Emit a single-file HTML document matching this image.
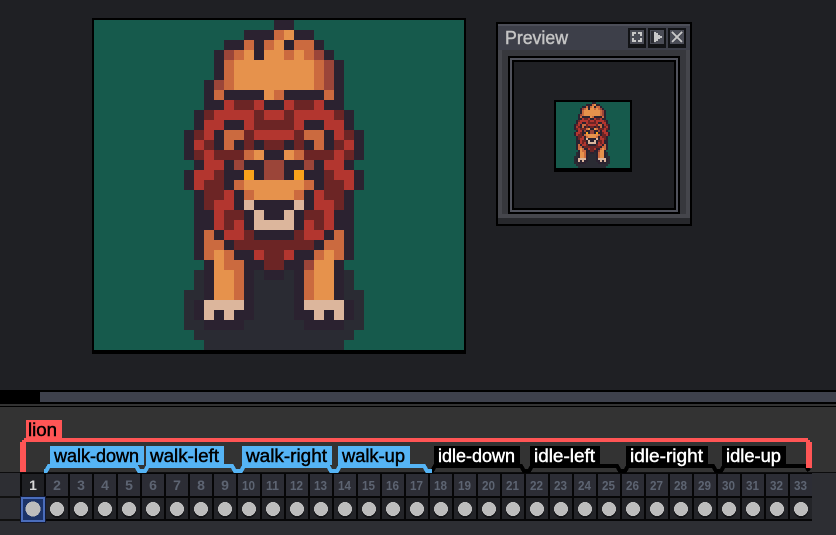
<!DOCTYPE html>
<html><head><meta charset="utf-8"><style>
html,body{margin:0;padding:0;background:#1f2024;width:836px;height:535px;overflow:hidden}
svg{display:block;position:absolute;left:0;top:0}
text{font-family:"Liberation Sans",sans-serif}
.b{stroke-width:.45;paint-order:stroke}
</style></head><body>
<svg width="836" height="535" viewBox="0 0 836 535" shape-rendering="crispEdges">
<defs>
<g id="s" fill="none" stroke-width="1">
<path stroke="#2a2b33" d="M10 25.5h1M16 25.5h1M19 25.5h1M25 25.5h1M10 26.5h1M16 26.5h4M25 26.5h1M9 27.5h2M16 27.5h4M25 27.5h2M9 28.5h1M16 28.5h4M26 28.5h1M9 29.5h1M16 29.5h4M26 29.5h1M9 30.5h2M15 30.5h6M25 30.5h2M10 31.5h16M11 32.5h14"/>
<path stroke="#2b2230" d="M18 .5h2M15 1.5h3M20 1.5h2M13 2.5h2M16 2.5h1M19 2.5h1M22 2.5h1M12 3.5h1M16 3.5h1M23 3.5h1M12 4.5h1M24 4.5h1M12 5.5h1M24 5.5h1M11 6.5h1M24 6.5h1M11 7.5h1M13 7.5h4M19 7.5h4M24 7.5h1M11 8.5h2M17 8.5h2M23 8.5h2M10 9.5h1M25 9.5h1M10 10.5h1M13 10.5h2M21 10.5h2M25 10.5h1M9 11.5h1M12 11.5h1M23 11.5h1M26 11.5h1M9 12.5h1M12 12.5h1M14 12.5h1M16 12.5h1M19 12.5h1M21 12.5h1M23 12.5h1M26 12.5h1M9 13.5h1M17 13.5h2M26 13.5h1M10 14.5h1M13 14.5h1M15 14.5h2M19 14.5h2M22 14.5h1M25 14.5h1M9 15.5h1M13 15.5h2M16 15.5h1M19 15.5h1M21 15.5h2M26 15.5h1M9 16.5h1M13 16.5h1M22 16.5h1M26 16.5h1M10 17.5h1M14 17.5h1M21 17.5h1M25 17.5h1M10 18.5h1M14 18.5h1M16 18.5h4M21 18.5h1M25 18.5h1M10 19.5h2M15 19.5h1M17 19.5h2M20 19.5h1M24 19.5h2M10 20.5h2M15 20.5h1M20 20.5h1M24 20.5h2M10 21.5h1M12 21.5h1M16 21.5h4M23 21.5h1M25 21.5h1M10 22.5h1M13 22.5h1M22 22.5h1M25 22.5h1M10 23.5h1M14 23.5h2M20 23.5h2M25 23.5h1M11 24.5h1M15 24.5h2M19 24.5h2M24 24.5h1M11 25.5h1M15 25.5h1M17 25.5h2M20 25.5h1M24 25.5h1M11 26.5h1M15 26.5h1M20 26.5h1M24 26.5h1M11 27.5h1M15 27.5h1M20 27.5h1M24 27.5h1M10 28.5h1M15 28.5h1M20 28.5h1M25 28.5h1M10 29.5h1M12 29.5h1M14 29.5h2M20 29.5h2M23 29.5h1M25 29.5h1M11 30.5h4M21 30.5h4"/>
<path stroke="#e6924c" d="M19 1.5h1M18 2.5h1M15 3.5h1M17 3.5h2M20 3.5h1M14 4.5h8M14 5.5h8M14 6.5h8M17 7.5h1M16 13.5h1M19 13.5h1M15 16.5h6M16 17.5h4M12 23.5h1M23 23.5h1M12 24.5h1M22 24.5h2M12 25.5h2M22 25.5h2M12 26.5h2M22 26.5h2M12 27.5h2M22 27.5h2"/>
<path stroke="#cb6a3f" d="M18 1.5h1M15 2.5h1M17 2.5h1M20 2.5h2M14 3.5h1M19 3.5h1M21 3.5h1M13 4.5h1M22 4.5h1M13 5.5h1M22 5.5h1M13 6.5h1M22 6.5h1M12 7.5h1M18 7.5h1M23 7.5h1M13 11.5h2M21 11.5h2M13 12.5h1M22 12.5h1M15 13.5h1M20 13.5h1M14 16.5h1M21 16.5h1M15 17.5h1M20 17.5h1M11 21.5h1M24 21.5h1M11 22.5h2M23 22.5h2M11 23.5h1M13 23.5h1M22 23.5h1M24 23.5h1M13 24.5h2M14 25.5h1M21 25.5h1M14 26.5h1M21 26.5h1M14 27.5h1M21 27.5h1"/>
<path stroke="#9b4539" d="M13 3.5h1M22 3.5h1M23 4.5h1M23 5.5h1M12 6.5h1M23 6.5h1M14 14.5h1M17 14.5h2M21 14.5h1M17 15.5h2M21 24.5h1"/>
<path stroke="#b3362f" d="M13 8.5h1M16 8.5h1M19 8.5h1M22 8.5h1M12 9.5h4M17 9.5h2M20 9.5h4M11 10.5h2M15 10.5h1M20 10.5h1M23 10.5h2M11 11.5h1M16 11.5h4M24 11.5h1M10 12.5h1M25 12.5h1M11 13.5h1M24 13.5h1M11 14.5h2M23 14.5h2M10 15.5h2M24 15.5h2M10 16.5h1M25 16.5h1M13 17.5h1M22 17.5h1M12 18.5h2M22 18.5h2M12 19.5h1M23 19.5h1M12 20.5h1M14 20.5h1M21 20.5h1M23 20.5h1M13 21.5h2M21 21.5h2M16 23.5h1M19 23.5h1"/>
<path stroke="#6c2525" d="M14 8.5h2M20 8.5h2M11 9.5h1M16 9.5h1M19 9.5h1M24 9.5h1M16 10.5h4M10 11.5h1M15 11.5h1M20 11.5h1M25 11.5h1M11 12.5h1M15 12.5h1M17 12.5h2M20 12.5h1M24 12.5h1M10 13.5h1M12 13.5h3M21 13.5h3M25 13.5h1M12 15.5h1M23 15.5h1M11 16.5h2M23 16.5h2M11 17.5h2M23 17.5h2M11 18.5h1M24 18.5h1M13 19.5h2M21 19.5h2M13 20.5h1M22 20.5h1M15 21.5h1M20 21.5h1M14 22.5h8M17 23.5h2M17 24.5h2"/>
<path stroke="#dcb69c" d="M15 18.5h1M20 18.5h1M16 19.5h1M19 19.5h1M16 20.5h4M11 28.5h4M21 28.5h4M11 29.5h1M13 29.5h1M22 29.5h1M24 29.5h1"/>
<path stroke="#f9a31b" d="M15 15.5h1M20 15.5h1"/>
</g>
</defs>

<!-- main canvas -->
<rect x="92" y="18" width="374" height="336" fill="#000"/>
<rect x="94" y="20" width="370" height="330" fill="#165a4c"/>
<svg x="94" y="20" width="370" height="330" viewBox="0 0 37 33"><use href="#s"/></svg>

<!-- preview window -->
<rect x="496" y="22" width="196" height="204" fill="#000"/>
<rect x="498" y="24" width="192" height="200" fill="#27282c"/>
<rect x="498" y="24" width="192" height="194" fill="#45464c"/>
<rect x="502" y="50" width="184" height="164" fill="#37383d"/>
<rect x="498" y="24" width="192" height="26" fill="#3d3f49"/>
<rect x="498" y="24" width="192" height="2" fill="#4c4e58"/>
<text class="b" x="505" y="44" font-size="18" fill="#c4c4c4" stroke="#c4c4c4" textLength="63" lengthAdjust="spacingAndGlyphs">Preview</text>
<g>
<rect x="628" y="28" width="18" height="20" fill="#121316"/><rect x="630" y="30" width="14" height="14" fill="#4a4c56"/>
<rect x="648" y="28" width="18" height="20" fill="#121316"/><rect x="650" y="30" width="14" height="14" fill="#4a4c56"/>
<rect x="668" y="28" width="18" height="20" fill="#121316"/><rect x="670" y="30" width="14" height="14" fill="#4a4c56"/>
<path fill="#c8c8c8" d="M632 32h4v2h-2v2h-2zM638 32h4v4h-2v-2h-2zM632 38h2v2h2v2h-4zM640 38h2v4h-4v-2h2z"/>
<rect x="651" y="31" width="3" height="12" fill="#2c2d33"/>
<path fill="#c8c8c8" d="M654 32h2v1h2v2h2v1h2v2h-2v1h-2v2h-2v1h-2z"/>
<path fill="none" stroke="#c8c8c8" stroke-width="2" d="M672 32l10 10M682 32l-10 10"/>
</g>
<rect x="508" y="56" width="172" height="158" fill="#000"/>
<rect x="510" y="58" width="168" height="154" fill="#50525c"/>
<rect x="512" y="60" width="164" height="150" fill="#000"/>
<rect x="514" y="62" width="160" height="146" fill="#1f2024"/>
<rect x="554" y="100" width="78" height="72" fill="#000"/>
<rect x="556" y="102" width="74" height="66" fill="#165a4c"/>
<svg x="556" y="102" width="74" height="66" viewBox="0 0 37 33"><use href="#s"/></svg>

<!-- scrollbar -->
<rect x="0" y="390" width="836" height="14" fill="#000"/>
<rect x="40" y="392" width="796" height="10" fill="#3e414c"/>
<rect x="0" y="404" width="836" height="2" fill="#333"/>
<rect x="0" y="406" width="836" height="1" fill="#000"/>

<!-- timeline -->
<rect x="0" y="407" width="836" height="65" fill="#333"/>
<rect x="0" y="472" width="836" height="63" fill="#2d2e33"/>
<rect x="0" y="472" width="836" height="1" fill="#0c0c0d"/>
<rect x="0" y="496" width="20" height="2" fill="#111"/>
<rect x="0" y="519" width="20" height="2" fill="#111"/>
<rect x="20" y="473" width="792" height="48" fill="#060607"/>
<path d="M22 485H812" fill="none" stroke="#2c2d35" stroke-width="22" stroke-dasharray="22 2"/>
<rect x="22" y="474" width="22" height="22" fill="#1f2024"/>
<path d="M22 508.5H812" fill="none" stroke="#232428" stroke-width="21" stroke-dasharray="22 2"/>
<path d="M33 511H812" fill="none" stroke="#141518" stroke-width="14" stroke-linecap="round" stroke-dasharray="0 24"/>
<path d="M33 509H812" fill="none" stroke="#bdbdbd" stroke-width="14" stroke-linecap="round" stroke-dasharray="0 24"/>

<!-- tags -->
<g fill="none" stroke-width="4">
<path stroke="#000" d="M430 471H432L435 466H521L524 471H529L532 466H617L620 471H625L628 466H713L716 471H721L724 466H806L809 471"/>
<path stroke="#55b4f5" d="M44 471H46L49 466H136L139 471H145L148 466H232L235 471H241L244 466H328L331 471H337L340 466H424L427 471H432"/>
</g>
<g fill="#55b4f5">
<rect x="50" y="446" width="94" height="19"/><rect x="146" y="446" width="78" height="19"/>
<rect x="242" y="446" width="90" height="19"/><rect x="338" y="446" width="72" height="19"/>
</g>
<g fill="#000">
<rect x="434" y="446" width="86" height="19"/><rect x="530" y="446" width="70" height="19"/>
<rect x="626" y="446" width="82" height="19"/><rect x="722" y="446" width="64" height="19"/>
</g>
<path fill="#ff5555" d="M26 420H62V438H808V440H810V442H812V468H806V442H26V472H20V442H22V440H24V438H26Z"/>
<g font-size="18" class="b">
<text class="b" x="28" y="436" fill="#000" stroke="#000" textLength="29" lengthAdjust="spacingAndGlyphs">lion</text>
<g fill="#000" stroke="#000">
<text class="b" x="54" y="462" textLength="85" lengthAdjust="spacingAndGlyphs">walk-down</text>
<text class="b" x="150" y="462" textLength="69" lengthAdjust="spacingAndGlyphs">walk-left</text>
<text class="b" x="246" y="462" textLength="81" lengthAdjust="spacingAndGlyphs">walk-right</text>
<text class="b" x="342" y="462" textLength="63" lengthAdjust="spacingAndGlyphs">walk-up</text>
</g>
<g fill="#fff" stroke="#fff">
<text class="b" x="438" y="462" textLength="77" lengthAdjust="spacingAndGlyphs">idle-down</text>
<text class="b" x="534" y="462" textLength="61" lengthAdjust="spacingAndGlyphs">idle-left</text>
<text class="b" x="630" y="462" textLength="73" lengthAdjust="spacingAndGlyphs">idle-right</text>
<text class="b" x="726" y="462" textLength="55" lengthAdjust="spacingAndGlyphs">idle-up</text>
</g>
</g>

<!-- frame numbers -->
<g font-size="14" font-weight="bold" fill="#5d6472" text-anchor="middle">
<text x="33" y="490" fill="#d8d8d8">1</text>
<text x="57" y="490">2</text><text x="81" y="490">3</text><text x="105" y="490">4</text><text x="129" y="490">5</text>
<text x="153" y="490">6</text><text x="177" y="490">7</text><text x="201" y="490">8</text><text x="225" y="490">9</text>
</g>
<g font-size="13" font-weight="bold" fill="#5d6472">
<text x="242" y="490" textLength="13" lengthAdjust="spacingAndGlyphs">10</text>
<text x="266" y="490" textLength="13" lengthAdjust="spacingAndGlyphs">11</text>
<text x="290" y="490" textLength="13" lengthAdjust="spacingAndGlyphs">12</text>
<text x="314" y="490" textLength="13" lengthAdjust="spacingAndGlyphs">13</text>
<text x="338" y="490" textLength="13" lengthAdjust="spacingAndGlyphs">14</text>
<text x="362" y="490" textLength="13" lengthAdjust="spacingAndGlyphs">15</text>
<text x="386" y="490" textLength="13" lengthAdjust="spacingAndGlyphs">16</text>
<text x="410" y="490" textLength="13" lengthAdjust="spacingAndGlyphs">17</text>
<text x="434" y="490" textLength="13" lengthAdjust="spacingAndGlyphs">18</text>
<text x="458" y="490" textLength="13" lengthAdjust="spacingAndGlyphs">19</text>
<text x="482" y="490" textLength="13" lengthAdjust="spacingAndGlyphs">20</text>
<text x="506" y="490" textLength="13" lengthAdjust="spacingAndGlyphs">21</text>
<text x="530" y="490" textLength="13" lengthAdjust="spacingAndGlyphs">22</text>
<text x="554" y="490" textLength="13" lengthAdjust="spacingAndGlyphs">23</text>
<text x="578" y="490" textLength="13" lengthAdjust="spacingAndGlyphs">24</text>
<text x="602" y="490" textLength="13" lengthAdjust="spacingAndGlyphs">25</text>
<text x="626" y="490" textLength="13" lengthAdjust="spacingAndGlyphs">26</text>
<text x="650" y="490" textLength="13" lengthAdjust="spacingAndGlyphs">27</text>
<text x="674" y="490" textLength="13" lengthAdjust="spacingAndGlyphs">28</text>
<text x="698" y="490" textLength="13" lengthAdjust="spacingAndGlyphs">29</text>
<text x="722" y="490" textLength="13" lengthAdjust="spacingAndGlyphs">30</text>
<text x="746" y="490" textLength="13" lengthAdjust="spacingAndGlyphs">31</text>
<text x="770" y="490" textLength="13" lengthAdjust="spacingAndGlyphs">32</text>
<text x="794" y="490" textLength="13" lengthAdjust="spacingAndGlyphs">33</text>
</g>

<!-- selected cel -->
<rect x="20" y="496" width="26" height="27" fill="#131a33"/>
<rect x="21" y="497" width="24" height="25" fill="#4a6dbc"/>
<rect x="23" y="499" width="20" height="21" fill="#1c3368"/>
<path d="M33 509h0" fill="none" stroke="#bdbdbd" stroke-width="15" stroke-linecap="round"/>
</svg>
</body></html>
